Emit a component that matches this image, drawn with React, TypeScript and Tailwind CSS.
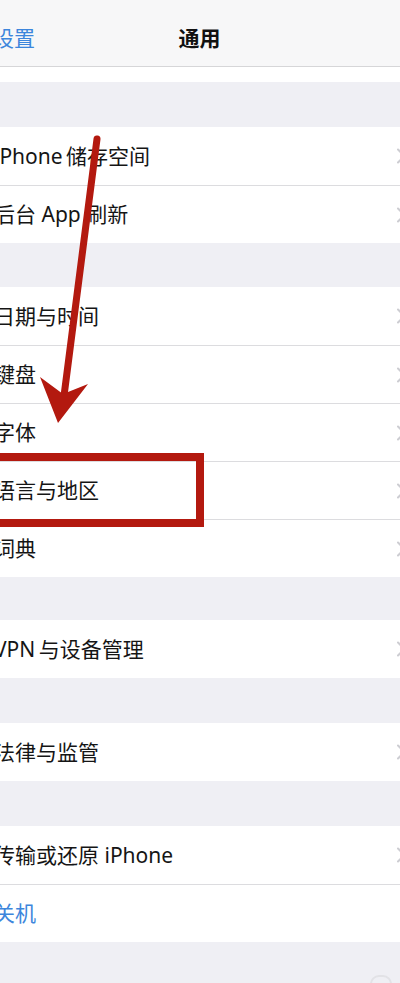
import React from "react";

const font = {
  fontFamily: '"Noto Sans", "Noto Sans CJK SC", sans-serif',
};

function Chevron() {
  return (
    <svg width="10" height="16" viewBox="0 0 10 16" className="shrink-0 -mr-[6px]">
      <path d="M2 1.5 L8.5 8 L2 14.5" fill="none" stroke="#cdcdd2" strokeWidth="2" strokeLinecap="round" strokeLinejoin="round" />
    </svg>
  );
}

function Row({ label, first, blue, chevron = true }: { label: string; first?: boolean; blue?: boolean; chevron?: boolean }) {
  return (
    <div className={`h-[58px] bg-white flex items-center justify-between ${first ? "" : "border-t border-[#dcdcdf]"}`}>
      <span className={`-ml-[6px] text-[21px] leading-none whitespace-nowrap ${blue ? "text-[#3d86dc]" : "text-[#151515]"}`}>{label}</span>
      {chevron && <Chevron />}
    </div>
  );
}

function Group({ items }: { items: { label: string; blue?: boolean; chevron?: boolean }[] }) {
  return (
    <div className="flex flex-col">
      {items.map((it, i) => (
        <Row key={it.label} label={it.label} first={i === 0} blue={it.blue} chevron={it.chevron} />
      ))}
    </div>
  );
}

export default function App() {
  return (
    <div className="relative w-[400px] h-[983px] overflow-hidden bg-[#efeff4]" style={font}>
      {/* Nav bar */}
      <div className="h-[67px] bg-[#f7f7f8] border-b border-[#d6d6d8] flex items-center justify-center relative">
        <span className="absolute left-[-7px] top-[28px] text-[21px] leading-none text-[#3d86dc]">设置</span>
        <span className="text-[21px] font-bold leading-none text-[#111] mt-[10px] -ml-[1px]">通用</span>
      </div>
      <div className="h-[15px] bg-white" />
      <div className="h-[45px]" />
      <Group items={[{ label: "iPhone\u2009储存空间" }, { label: "后台 App 刷新" }]} />
      <div className="h-[44px]" />
      <Group
        items={[
          { label: "日期与时间" },
          { label: "键盘" },
          { label: "字体" },
          { label: "语言与地区" },
          { label: "词典" },
        ]}
      />
      <div className="h-[43px]" />
      <Group items={[{ label: "VPN\u2009与设备管理" }]} />
      <div className="h-[45px]" />
      <Group items={[{ label: "法律与监管" }]} />
      <div className="h-[45px]" />
      <Group items={[{ label: "传输或还原 iPhone" }, { label: "关机", blue: true, chevron: false }]} />

      {/* red highlight box */}
      <div className="absolute left-[-12px] top-[453px] w-[216px] h-[74px] border-[8px] border-[#b3190f]" />

      {/* red arrow */}
      <svg className="absolute left-0 top-0 pointer-events-none" width="400" height="983" viewBox="0 0 400 983">
        <line x1="97" y1="139" x2="64" y2="396" stroke="#b3190f" strokeWidth="7" strokeLinecap="round" />
        <polygon points="40,377 63,394 88,384 58,423" fill="#b3190f" />
      </svg>

      {/* faint watermark */}
      <div className="absolute right-[8px] bottom-[-10px] w-[22px] h-[18px] rounded-full border-2 border-[#e2e2e6]" />
    </div>
  );
}
